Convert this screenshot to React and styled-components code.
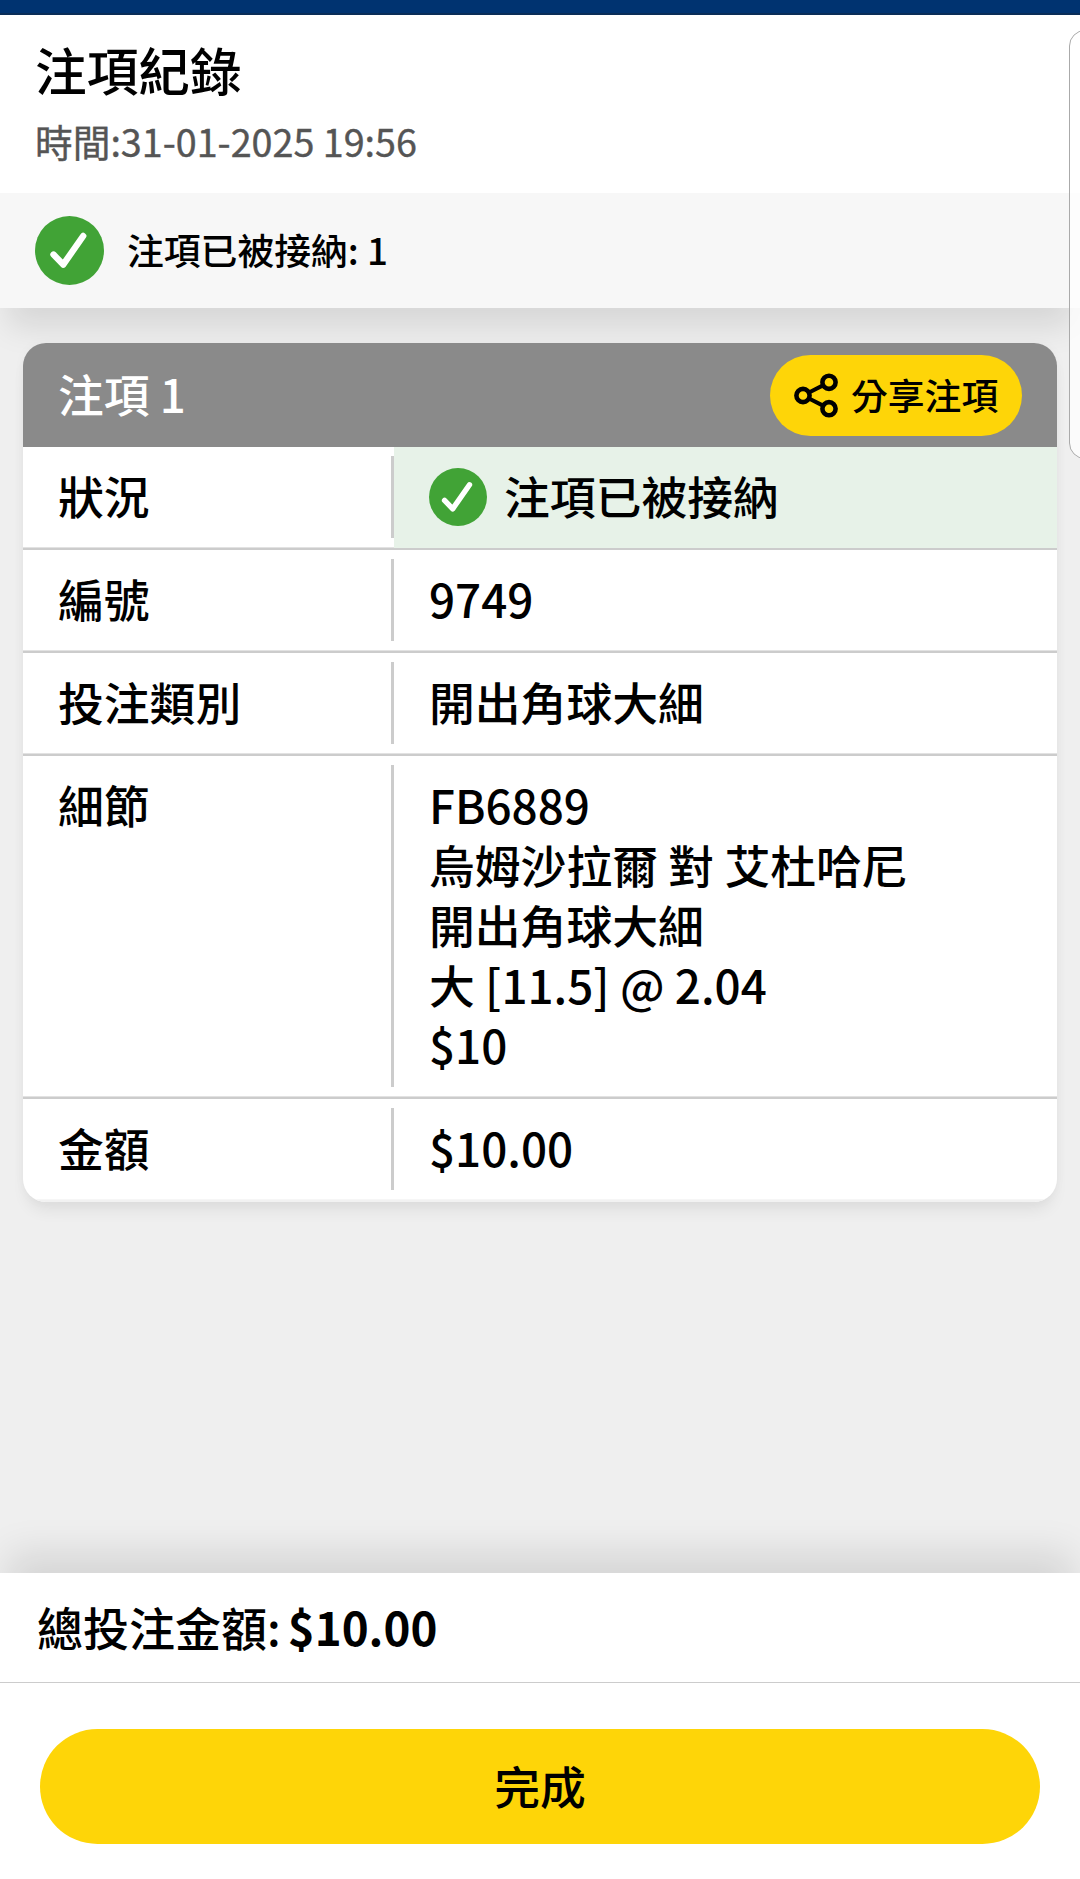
import React from "react";
import styled, { createGlobalStyle } from "styled-components";

const GlobalStyle = createGlobalStyle`
  * { box-sizing: border-box; }
  body {
    margin: 0;
    background: #efefef;
    color: #000;
    font-family: "Noto Sans CJK TC", sans-serif;
    font-weight: 500;
  }
`;

const Page = styled.div`
  position: relative;
  display: flex;
  flex-direction: column;
  width: 1080px;
  height: 1879px;
  overflow: hidden;
  background: #efefef;
`;

const TopBar = styled.div`
  height: 15px;
  flex: none;
  background: #003370;
  border-bottom: 2px solid #0a2d57;
`;

const Header = styled.header`
  flex: none;
  height: 178px;
  padding: 18px 0 0 35px;
  background: #fff;
`;

const Title = styled.h1`
  margin: 0;
  font-size: 51.7px;
  line-height: 72px;
  font-weight: 500;
`;

const Timestamp = styled.p`
  margin: 8px 0 0;
  font-size: 37.7px;
  line-height: 56px;
  font-weight: 400;
  color: #555;
  -webkit-text-stroke: 0.4px #555;
`;

const Summary = styled.section`
  flex: none;
  display: flex;
  align-items: center;
  gap: 23px;
  height: 115px;
  padding-left: 35px;
  background: #f7f7f7;
  box-shadow: 0 27px 30px -8px rgba(0, 0, 0, 0.105);
  font-size: 36.8px;
  line-height: 56px;
`;

const SummaryText = styled.span`
  padding-bottom: 4px;
`;

const Content = styled.main`
  flex: 1;
  padding: 35px 23px 0;
`;

const Card = styled.section`
  border-radius: 23px;
  background: #fff;
  box-shadow: 0 12px 16px -4px rgba(0, 0, 0, 0.07), 0 0 12px rgba(0, 0, 0, 0.03);
  overflow: hidden;
`;

const CardHeader = styled.div`
  display: flex;
  align-items: center;
  justify-content: space-between;
  height: 104px;
  padding: 0 35px;
  background: #8a8a8a;
`;

const CardTitle = styled.h2`
  margin: 0;
  padding-bottom: 4px;
  color: #fff;
  font-size: 45.7px;
  line-height: 60px;
  font-weight: 500;
`;

const ShareButton = styled.button`
  display: flex;
  align-items: center;
  gap: 12px;
  width: 252px;
  height: 81px;
  padding: 1px 0 0 24px;
  border: 0;
  border-radius: 41px;
  background: #fed508;
  color: #000;
  font: inherit;
  font-size: 36.8px;
  line-height: 56px;
`;

const ShareLabel = styled.span`
  padding-bottom: 3px;
`;

const Row = styled.div`
  display: flex;
  border-bottom: 2px solid ${(p) => (p.$last ? "#f2f2f2" : "#ccc")};
  box-shadow: inset 0 -1px 0 ${(p) => (p.$last ? "#f6f6f6" : "#e2e2e2")};
  font-size: 45.8px;
  line-height: 60px;
`;

const Label = styled.div`
  width: 368px;
  padding: 18px 0 23px 35px;
`;

const Divider = styled.div`
  width: 3px;
  margin: 9px 0 10px;
  background: #ccc;
`;

const Value = styled.div`
  flex: 1;
  display: flex;
  align-items: center;
  gap: 17px;
  padding: 18px 0 23px 35px;
  background: ${(p) => (p.$accepted ? "#e7f2e8" : "transparent")};
`;

const Footer = styled.footer`
  flex: none;
  height: 306px;
  background: #fff;
  box-shadow: 0 -28px 36px -8px rgba(0, 0, 0, 0.11);
`;

const Total = styled.div`
  display: flex;
  gap: 7px;
  height: 110px;
  padding: 20px 0 0 37px;
  border-bottom: 1px solid #ccc;
  font-size: 46px;
  line-height: 66px;
`;

const Amount = styled.strong`
  font-size: 45.7px;
  font-weight: 700;
`;

const DoneButton = styled.button`
  display: block;
  width: 1000px;
  height: 115px;
  margin: 46px auto 0;
  padding: 0 0 4px;
  border: 0;
  border-radius: 58px;
  background: #fed508;
  color: #000;
  font: inherit;
  font-size: 45.8px;
  line-height: 60px;
`;

const EdgePanel = styled.div`
  position: absolute;
  top: 30px;
  right: -30px;
  width: 41px;
  height: 429px;
  border: 1px solid #aaa;
  border-radius: 16px;
  background: rgba(255, 255, 255, 0.75);
`;

const Icon = styled.svg`
  display: block;
  flex: none;
`;

const CheckWrap = styled.span`
  display: flex;
  align-items: center;
  height: 60px;
  padding-top: 4px;
`;

function CheckIcon({ size }) {
  return (
    <Icon width={size} height={size} viewBox="0 0 69 69">
      <circle cx="34.5" cy="34.5" r="34.5" fill="#41a336" />
      <path
        d="M18.5 38.6 28.2 48.6 48.2 20"
        fill="none"
        stroke="#fff"
        strokeWidth="6.4"
        strokeLinecap="round"
        strokeLinejoin="round"
      />
    </Icon>
  );
}

function ShareIcon() {
  return (
    <Icon width="45" height="45" viewBox="0 0 45 45" fill="none" stroke="#000">
      <g strokeWidth="4.6">
        <circle cx="9" cy="22.5" r="6.6" />
        <circle cx="35" cy="9.3" r="6.6" />
        <circle cx="35" cy="35.7" r="6.6" />
      </g>
      <path d="M15 19.5 29 12.4M15 25.5 29 32.6" strokeWidth="4" />
    </Icon>
  );
}

const ROWS = [
  { label: "狀況", value: "注項已被接納", accepted: true },
  { label: "編號", value: "9749" },
  { label: "投注類別", value: "開出角球大細" },
  {
    label: "細節",
    lines: ["FB6889", "烏姆沙拉爾 對 艾杜哈尼", "開出角球大細", "大 [11.5] @ 2.04", "$10"],
  },
  { label: "金額", value: "$10.00" },
];

export default function App() {
  return (
    <>
      <GlobalStyle />
      <Page lang="zh-Hant">
        <TopBar />
        <Header>
          <Title>注項紀錄</Title>
          <Timestamp>時間:31-01-2025 19:56</Timestamp>
        </Header>
        <Summary>
          <CheckIcon size={69} />
          <SummaryText>注項已被接納: 1</SummaryText>
        </Summary>
        <Content>
          <Card>
            <CardHeader>
              <CardTitle>注項 1</CardTitle>
              <ShareButton>
                <ShareIcon />
                <ShareLabel>分享注項</ShareLabel>
              </ShareButton>
            </CardHeader>
            {ROWS.map((row, i) => (
              <Row key={row.label} $last={i === ROWS.length - 1}>
                <Label>{row.label}</Label>
                <Divider />
                <Value $accepted={row.accepted}>
                  {row.accepted && (
                    <CheckWrap>
                      <CheckIcon size={58} />
                    </CheckWrap>
                  )}
                  <div>
                    {row.lines ? row.lines.map((l) => <div key={l}>{l}</div>) : row.value}
                  </div>
                </Value>
              </Row>
            ))}
          </Card>
        </Content>
        <Footer>
          <Total>
            <span>總投注金額:</span>
            <Amount>$10.00</Amount>
          </Total>
          <DoneButton>完成</DoneButton>
        </Footer>
        <EdgePanel />
      </Page>
    </>
  );
}
